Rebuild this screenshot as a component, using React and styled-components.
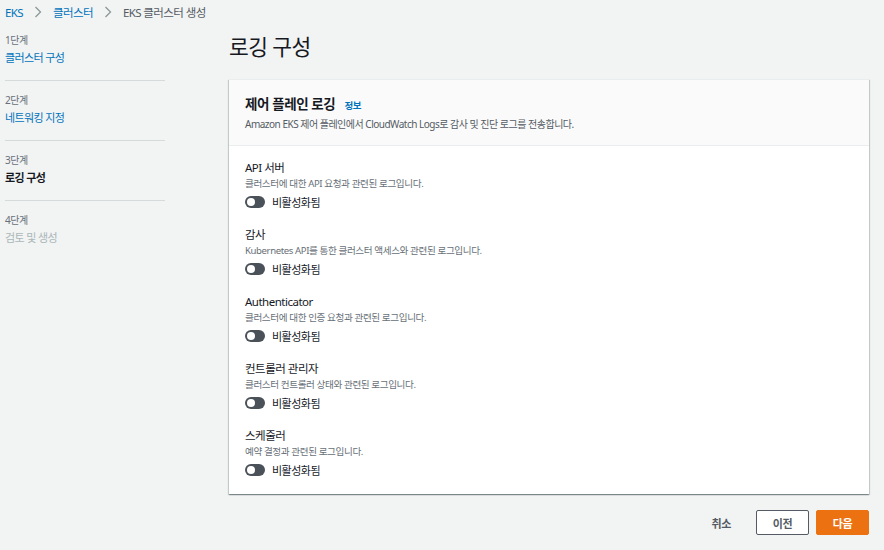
import React from "react";
import styled, { createGlobalStyle } from "styled-components";

const Global = createGlobalStyle`
  html, body { margin: 0; padding: 0; background: #f2f3f3; }
  body {
    font-family: "Noto Sans", "Noto Sans CJK KR", sans-serif;
    color: #16191f;
    -webkit-font-smoothing: antialiased;
  }
  * { box-sizing: border-box; }
`;

const Page = styled.div`
  width: 884px;
  min-height: 550px;
  padding: 0 15px 0 5px;
`;

const Breadcrumbs = styled.nav`
  display: flex;
  align-items: center;
  height: 24px;
  font-size: 11.5px;
  gap: 11px;
`;

const Crumb = styled.span`
  color: ${(p) => (p.$current ? "#545b64" : "#0073bb")};
  letter-spacing: -0.6px;
`;

const Chevron = () => (
  <svg width="8" height="12" viewBox="0 0 8 12" fill="none">
    <polyline points="1.5,1 6.5,6 1.5,11" stroke="#879596" strokeWidth="1.2" />
  </svg>
);

const Body = styled.div`
  display: flex;
  gap: 64px;
  margin-top: 4px;
`;

const SideNav = styled.ol`
  list-style: none;
  margin: 0;
  padding: 0;
  width: 160px;
  flex: none;
`;

const Step = styled.li`
  padding: ${(p) => (p.$first ? "4px 0 13px" : "11px 0 13px")};
  border-top: ${(p) => (p.$first ? "none" : "1px solid #d5dbdb")};
`;

const StepLabel = styled.div`
  font-size: 10px;
  line-height: 16px;
  color: #687078;
  letter-spacing: -0.4px;
`;

const StepName = styled.div`
  margin-top: 1px;
  font-size: 11px;
  line-height: 18px;
  letter-spacing: -0.6px;
  font-weight: ${(p) => (p.$state === "active" ? 700 : 400)};
  color: ${(p) =>
    p.$state === "active" ? "#16191f" : p.$state === "disabled" ? "#aab7b8" : "#0073bb"};
`;

const Main = styled.main`
  flex: 1;
  min-width: 0;
`;

const Title = styled.h1`
  margin: 0 0 15px;
  font-size: 21.5px;
  line-height: 34px;
  font-weight: 400;
  letter-spacing: -0.6px;
  padding-top: 2px;
`;

const Card = styled.section`
  background: #fff;
  border-top: 1px solid #eaeded;
  box-shadow: 0 1px 1px 0 rgba(0, 28, 36, 0.3), 1px 1px 1px 0 rgba(0, 28, 36, 0.15),
    -1px 1px 1px 0 rgba(0, 28, 36, 0.15);
`;

const CardHeader = styled.header`
  background: #fafafa;
  border-bottom: 1px solid #eaeded;
  padding: 14px 16px 13px;
`;

const CardTitle = styled.h2`
  margin: 0;
  display: flex;
  align-items: baseline;
  gap: 9px;
  font-size: 13.5px;
  line-height: 20px;
  font-weight: 700;
  letter-spacing: -0.4px;
`;

const InfoLink = styled.a`
  font-size: 9.5px;
  font-weight: 700;
  color: #0073bb;
  text-decoration: none;
`;

const CardDesc = styled.p`
  margin: 0;
  font-size: 10px;
  line-height: 16px;
  color: #545b64;
  letter-spacing: -0.5px;
`;

const CardBody = styled.div`
  padding: 13px 16px 14px;
  display: flex;
  flex-direction: column;
  gap: 14px;
`;

const Option = styled.div`
  display: flex;
  flex-direction: column;
`;

const OptionTitle = styled.div`
  font-size: 11.5px;
  line-height: 17px;
  letter-spacing: -0.5px;
`;

const OptionDesc = styled.div`
  font-size: 9.6px;
  line-height: 16px;
  color: #687078;
  letter-spacing: -0.4px;
`;

const ToggleRow = styled.label`
  display: flex;
  align-items: center;
  gap: 7px;
  height: 20px;
  font-size: 11px;
  letter-spacing: -0.5px;
`;

const Track = styled.span`
  position: relative;
  width: 20px;
  height: 12px;
  border-radius: 6px;
  background: ${(p) => (p.$on ? "#0073bb" : "#4b5159")};
  flex: none;
`;

const Knob = styled.span`
  position: absolute;
  top: 2px;
  left: ${(p) => (p.$on ? "10px" : "2px")};
  width: 8px;
  height: 8px;
  border-radius: 50%;
  background: #fff;
`;

const Footer = styled.div`
  display: flex;
  justify-content: flex-end;
  align-items: center;
  gap: 7px;
  margin-top: 16px;
`;

const Button = styled.button`
  height: 25px;
  min-width: ${(p) => (p.$variant === "link" ? "0" : "53px")};
  padding: 0 12px;
  border-radius: 2px;
  font-family: inherit;
  font-size: 11px;
  font-weight: 700;
  letter-spacing: -0.4px;
  cursor: pointer;
  border: 1px solid
    ${(p) => (p.$variant === "primary" ? "#ec7211" : p.$variant === "normal" ? "#545b64" : "transparent")};
  background: ${(p) => (p.$variant === "primary" ? "#ec7211" : p.$variant === "normal" ? "#fff" : "transparent")};
  color: ${(p) => (p.$variant === "primary" ? "#fff" : "#545b64")};
  margin-right: ${(p) => (p.$variant === "link" ? "5px" : "0")};
`;

const steps = [
  { label: "1단계", name: "클러스터 구성", state: "link" },
  { label: "2단계", name: "네트워킹 지정", state: "link" },
  { label: "3단계", name: "로깅 구성", state: "active" },
  { label: "4단계", name: "검토 및 생성", state: "disabled" },
];

const options = [
  { title: "API 서버", desc: "클러스터에 대한 API 요청과 관련된 로그입니다." },
  { title: "감사", desc: "Kubernetes API를 통한 클러스터 액세스와 관련된 로그입니다." },
  { title: "Authenticator", desc: "클러스터에 대한 인증 요청과 관련된 로그입니다." },
  { title: "컨트롤러 관리자", desc: "클러스터 컨트롤러 상태와 관련된 로그입니다." },
  { title: "스케줄러", desc: "예약 결정과 관련된 로그입니다." },
];

export default function App() {
  return (
    <>
      <Global />
      <Page>
        <Breadcrumbs>
          <Crumb>EKS</Crumb>
          <Chevron />
          <Crumb>클러스터</Crumb>
          <Chevron />
          <Crumb $current>EKS 클러스터 생성</Crumb>
        </Breadcrumbs>
        <Body>
          <SideNav>
            {steps.map((s, i) => (
              <Step key={s.label} $first={i === 0}>
                <StepLabel>{s.label}</StepLabel>
                <StepName $state={s.state}>{s.name}</StepName>
              </Step>
            ))}
          </SideNav>
          <Main>
            <Title>로깅 구성</Title>
            <Card>
              <CardHeader>
                <CardTitle>
                  제어 플레인 로깅 <InfoLink href="#">정보</InfoLink>
                </CardTitle>
                <CardDesc>
                  Amazon EKS 제어 플레인에서 CloudWatch Logs로 감사 및 진단 로그를 전송합니다.
                </CardDesc>
              </CardHeader>
              <CardBody>
                {options.map((o) => (
                  <Option key={o.title}>
                    <OptionTitle>{o.title}</OptionTitle>
                    <OptionDesc>{o.desc}</OptionDesc>
                    <ToggleRow>
                      <Track>
                        <Knob />
                      </Track>
                      비활성화됨
                    </ToggleRow>
                  </Option>
                ))}
              </CardBody>
            </Card>
            <Footer>
              <Button $variant="link">취소</Button>
              <Button $variant="normal">이전</Button>
              <Button $variant="primary">다음</Button>
            </Footer>
          </Main>
        </Body>
      </Page>
    </>
  );
}
